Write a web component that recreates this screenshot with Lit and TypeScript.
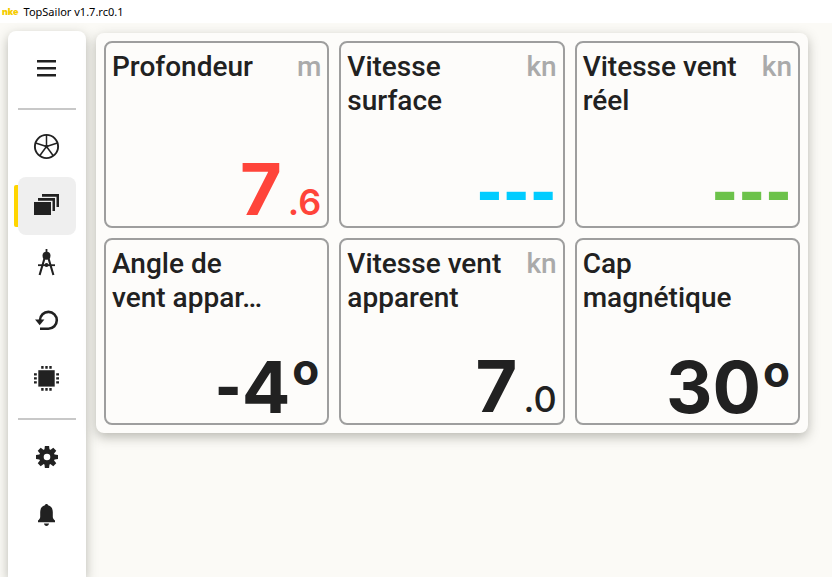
import { LitElement, html, css, svg, nothing } from "lit";
import { customElement, property } from "lit/decorators.js";
import { classMap } from "lit/directives/class-map.js";

const spoke = (deg: number) =>
  svg`<path d="M13.5 12.5V1" stroke="currentColor" stroke-width="1.5" transform="rotate(${deg} 13.5 12.5)" />`;
const tooth = (deg: number) =>
  svg`<path d="M11.9 2h4.2l.6 5h-5.4z" transform="rotate(${deg} 14 13)" />`;

const icons = {
  menu: svg`<path d="M4 5h19v2.6H4zM4 12h19v2.6H4zM4 19h19v2.6H4z" />`,
  wheel: svg`
    <circle cx="13.5" cy="12.5" r="11.6" fill="none" stroke="currentColor" stroke-width="1.9" />
    ${[0, 72, 144, 216, 288].map(spoke)}
    <circle cx="13.5" cy="12.5" r="1.8" />`,
  pages: svg`<path d="M1 10h17v13H1zM5 6h17v13h-2.5V8.7H5zM9 2h17v13h-2.5V4.7H9z" />`,
  compass: svg`
    <path d="M12.6 -1h1.8v4h-1.8z" />
    <circle cx="13.5" cy="5.8" r="4" />
    <path d="M11.6 8L6.6 25M15.4 8l5 17" fill="none" stroke="currentColor" stroke-width="2.1" />
    <path d="M5 14.3h17v1.8H5z" />
    <circle cx="13.5" cy="15" r="2" />`,
  undo: svg`
    <path d="M7 12.2a8.4 8.4 0 1 1 8.4 8.5H7" fill="none" stroke="currentColor" stroke-width="2.6" />
    <path d="M2 11.4h9.4L6.7 17.2z" />`,
  chip: svg`
    <path d="M5.3 4.2h16.4v16.4H5.3z" />
    ${[8.2, 12.3, 16.3].map(
      (x) => svg`<path d="M${x} 0h2.4v2.8h-2.4zM${x} 22h2.4v2.8h-2.4z" />`
    )}
    ${[7.2, 11.2, 15.2].map(
      (y) => svg`<path d="M1 ${y}h2.8v2.4H1zM23.2 ${y}h2.8v2.4h-2.8z" />`
    )}`,
  gear: svg`
    <circle cx="14" cy="13" r="5.6" fill="none" stroke="currentColor" stroke-width="4.6" />
    ${[0, 45, 90, 135, 180, 225, 270, 315].map(tooth)}`,
  bell: svg`
    <path d="M13.5 2c.9 0 1.5.6 1.6 1.3 3.3.8 4.7 3.5 4.7 6.8v4.6c0 1.800.9 2.600 2.200 3.800v1.700H5v-1.700c1.300-1.200 2.200-2 2.200-3.800v-4.600c0-3.300 1.400-6 4.700-6.800.1-.7.700-1.300 1.600-1.300z" />
    <path d="M11 21.400h5c-.2 1.600-1.200 2.500-2.500 2.500s-2.300-.9-2.500-2.500z" />`,
};

type IconName = keyof typeof icons;

@customElement("nav-button")
class NavButton extends LitElement {
  @property() icon: IconName = "menu";
  @property() label = "";
  @property({ type: Boolean }) active = false;

  static styles = css`
    :host {
      display: block;
    }
    .button {
      position: relative;
      display: flex;
      align-items: center;
      justify-content: center;
      width: 100%;
      height: 58px;
      padding: 0;
      border: 0;
      border-radius: 8px;
      background: none;
      color: #212121;
    }
    .active {
      background: #efefef;
    }
    .active::before {
      content: "";
      position: absolute;
      left: -4px;
      top: 8px;
      bottom: 8px;
      width: 4px;
      border-radius: 2px 0 0 2px;
      background: #ffd500;
    }
    .icon {
      width: 28px;
      height: 28px;
      fill: currentColor;
      overflow: visible;
    }
  `;

  render() {
    return html`<button
      type="button"
      class=${classMap({ button: true, active: this.active })}
      aria-label=${this.label}
      aria-current=${this.active ? "page" : nothing}
    >
      <svg class="icon" viewBox="0 0 28 28" aria-hidden="true">${icons[this.icon]}</svg>
    </button>`;
  }
}

interface Reading {
  label: string;
  unit?: string;
  dashes?: string;
  value?: string;
  decimals?: string;
  degree?: boolean;
  tone?: string;
}

@customElement("data-tile")
class DataTile extends LitElement {
  @property({ attribute: false }) reading!: Reading;

  static styles = css`
    :host {
      display: block;
      min-width: 0;
    }
    .tile {
      display: flex;
      flex-direction: column;
      justify-content: space-between;
      box-sizing: border-box;
      height: 100%;
      padding: 7px 6px 6px;
      border: 2px solid #9e9e9e;
      border-radius: 8px;
      background: #fdfcfa;
      color: #212121;
    }
    .head {
      display: flex;
      justify-content: space-between;
      font: 500 28px/34px Roboto, sans-serif;
    }
    .label {
      margin: 0;
      font: inherit;
      white-space: pre;
    }
    .unit {
      color: #aaa;
    }
    .value {
      display: flex;
      justify-content: flex-end;
      align-items: baseline;
      font: 700 72px/60px Inter, sans-serif;
    }
    .dash {
      font-family: Lato, sans-serif;
      font-weight: 900;
    }
    .decimals {
      margin-left: 6px;
      font-size: 36px;
      line-height: 36px;
      font-weight: 500;
    }
    .red .decimals {
      font-weight: 600;
    }
    .degree {
      align-self: flex-start;
      margin: 0 2px;
      font-size: 44px;
      line-height: 28px;
    }
    .red {
      color: #ff443a;
    }
    .blue {
      color: #00ccff;
    }
    .green {
      color: #6cc24a;
    }
  `;

  render() {
    const r = this.reading;
    return html`<article class="tile">
      <div class="head">
        <h2 class="label">${r.label}</h2>
        ${r.unit ? html`<span class="unit">${r.unit}</span>` : nothing}
      </div>
      <div class="value ${r.tone ?? ""}">
        ${r.dashes ? html`<span class="dash">${r.dashes}</span>` : nothing}
        ${r.value ? html`<span>${r.value}</span>` : nothing}
        ${r.decimals ? html`<span class="decimals">${r.decimals}</span>` : nothing}
        ${r.degree ? html`<span class="degree">o</span>` : nothing}
      </div>
    </article>`;
  }
}

const readings: Reading[] = [
  { label: "Profondeur", unit: "m", value: "7", decimals: ".6", tone: "red" },
  { label: "Vitesse\nsurface", unit: "kn", dashes: "---", tone: "blue" },
  { label: "Vitesse vent\nréel", unit: "kn", dashes: "---", tone: "green" },
  { label: "Angle de\nvent appar…", dashes: "-", value: "4", degree: true },
  { label: "Vitesse vent\napparent", unit: "kn", value: "7", decimals: ".0" },
  { label: "Cap\nmagnétique", value: "30", degree: true },
];

@customElement("app-root")
class AppRoot extends LitElement {
  static styles = css`
    :host {
      display: flex;
      flex-direction: column;
      height: 100vh;
      overflow: hidden;
      background: #fbfaf6;
    }
    .titlebar {
      display: flex;
      align-items: center;
      flex: none;
      gap: 5px;
      height: 23px;
      padding-left: 2px;
      background: #fff;
      color: #000;
      font: 11px/23px "Noto Sans", sans-serif;
    }
    .brand {
      color: #f5cc00;
      font: 900 9px/23px Inter, sans-serif;
    }
    .body {
      display: flex;
      flex: 1;
      align-items: flex-start;
      gap: 10px;
      padding: 8px 24px 0 8px;
      min-height: 0;
    }
    .sidebar {
      align-self: stretch;
      flex: none;
      box-sizing: border-box;
      width: 78px;
      padding: 8px 10px;
      border-radius: 8px 8px 0 0;
      background: #fff;
      box-shadow: 0 4px 12px rgba(60, 64, 50, 0.35);
    }
    .menu {
      padding: 1px 0;
    }
    .rule {
      height: 2px;
      margin: 9px 0;
      border: 0;
      background: #c8c8c8;
    }
    .panel {
      display: grid;
      flex: 1;
      grid-template-columns: repeat(3, minmax(0, 1fr));
      grid-auto-rows: 187px;
      gap: 10px;
      margin-top: 2px;
      padding: 8px;
      border-radius: 8px;
      background: #fdfcfa;
      box-shadow: 0 4px 12px rgba(60, 60, 50, 0.35);
    }
  `;

  render() {
    return html`
      <header class="titlebar">
        <span class="brand">nke</span>
        <span>TopSailor v1.7.rc0.1</span>
      </header>
      <div class="body">
        <nav class="sidebar">
          <nav-button class="menu" icon="menu" label="Menu"></nav-button>
          <hr class="rule" />
          <nav-button icon="wheel" label="Navigation"></nav-button>
          <nav-button icon="pages" label="Pages" active></nav-button>
          <nav-button icon="compass" label="Calibration"></nav-button>
          <nav-button icon="undo" label="Historique"></nav-button>
          <nav-button icon="chip" label="Appareils"></nav-button>
          <hr class="rule" />
          <nav-button icon="gear" label="Réglages"></nav-button>
          <nav-button icon="bell" label="Alarmes"></nav-button>
        </nav>
        <main class="panel">
          ${readings.map((r) => html`<data-tile .reading=${r}></data-tile>`)}
        </main>
      </div>
    `;
  }
}
